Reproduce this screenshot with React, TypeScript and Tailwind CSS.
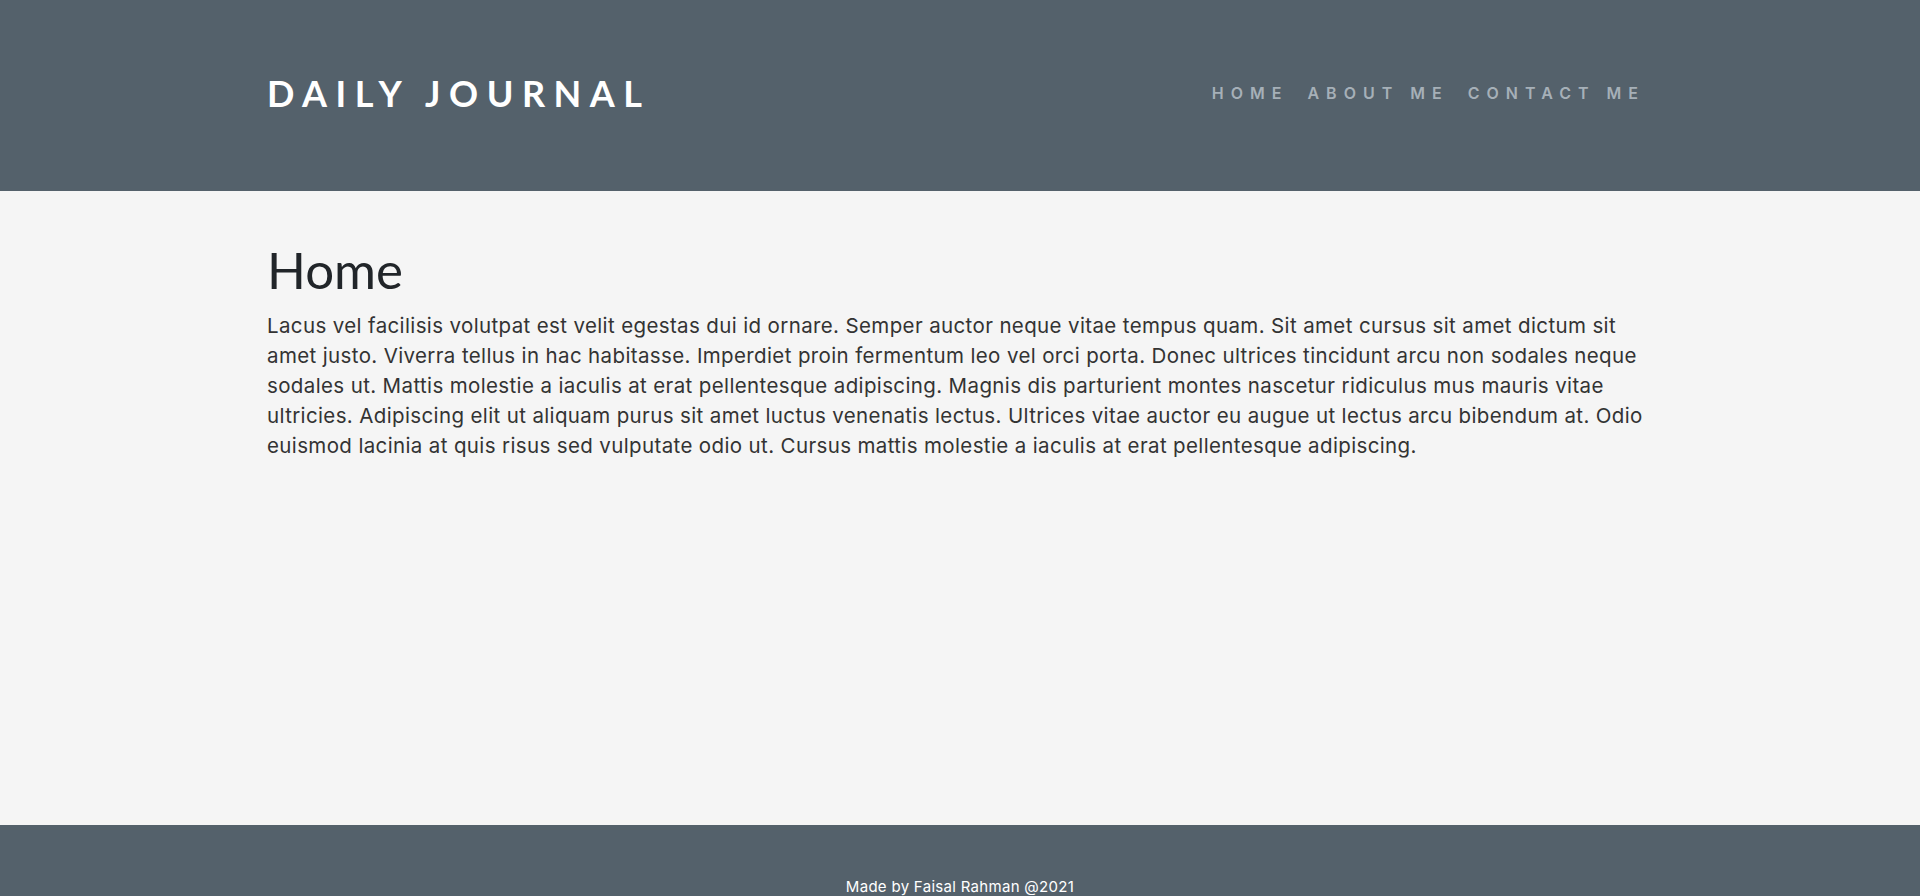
import React from "react";

const text =
  "Lacus vel facilisis volutpat est velit egestas dui id ornare. Semper auctor neque vitae tempus quam. Sit amet cursus sit amet dictum sit amet justo. Viverra tellus in hac habitasse. Imperdiet proin fermentum leo vel orci porta. Donec ultrices tincidunt arcu non sodales neque sodales ut. Mattis molestie a iaculis at erat pellentesque adipiscing. Magnis dis parturient montes nascetur ridiculus mus mauris vitae ultricies. Adipiscing elit ut aliquam purus sit amet luctus venenatis lectus. Ultrices vitae auctor eu augue ut lectus arcu bibendum at. Odio euismod lacinia at quis risus sed vulputate odio ut. Cursus mattis molestie a iaculis at erat pellentesque adipiscing.";

export default function App() {
  return (
    <div className="w-full h-[896px] overflow-hidden bg-[#f5f5f5] font-['Inter',sans-serif]">
      <header className="h-[191px] bg-[#54616b] flex items-center justify-between pl-[267px] pr-[270px] pb-[5px]">
        <div className="font-['Lato',sans-serif] font-bold text-[36px] tracking-[8.5px] text-white leading-none">
          DAILY JOURNAL
        </div>
        <nav className="flex gap-[19px] text-[16px] font-semibold tracking-[7px] text-[#a6b0b8] mr-[5px]">
          <a>HOME</a>
          <a>ABOUT ME</a>
          <a>CONTACT ME</a>
        </nav>
      </header>
      <main className="h-[634px] px-[267px] pt-[48px]">
        <h1 className="font-['Lato',sans-serif] text-[51px] leading-[1.2] text-[#212529] mb-[11px]">Home</h1>
        <p className="text-[20.5px] leading-[30px] text-[#333333] tracking-[0.37px] w-[1395px]">{text}</p>
      </main>
      <footer className="bg-[#54616b] h-[200px] pt-[51px] text-center text-white text-[15px] tracking-[0.3px]">
        Made by Faisal Rahman @2021
      </footer>
    </div>
  );
}
